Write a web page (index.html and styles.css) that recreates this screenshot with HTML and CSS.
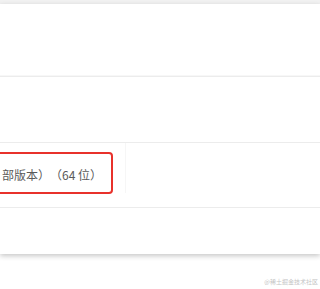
FILE: index.html
```html
<!DOCTYPE html>
<html lang="zh-CN">
<head>
<meta charset="utf-8">
<link rel="stylesheet" href="styles.css">
</head>
<body>
<div class="topbar"></div>
<div class="card">
  <div class="row r1"></div>
  <div class="row r2"></div>
  <div class="row r3">
    <div class="hl"><span class="txt">部版本）（64 位）</span></div>
    <div class="vline"></div>
  </div>
  <div class="row r4"></div>
</div>
<div class="mark">@稀土掘金技术社区</div>
</body>
</html>
```
FILE: styles.css
```css
html, body {
  margin: 0;
  padding: 0;
  background: #ffffff;
  overflow: hidden;
  font-family: "Noto Sans CJK SC", "Noto Sans", sans-serif;
}
.topbar {
  height: 4px;
  background: #f1f1f1;
}
.card {
  background: #ffffff;
  box-shadow: 0 2px 5px rgba(0, 0, 0, 0.22);
}
.row {
  border-bottom: 1px solid #ececec;
}
.r1 {
  height: 72px;
  box-shadow: inset 0 -4px 0 -3px #f7f7f7;
}
.r2 {
  height: 65px;
}
.r3 {
  height: 64px;
  display: flex;
  align-items: flex-start;
}
.r4 {
  height: 46px;
  border-bottom: 0;
}
.hl {
  margin-top: 9px;
  margin-left: -12px;
  height: 38px;
  border: 2px solid #e8312b;
  border-radius: 4px;
  padding: 0 9px 0 12px;
  display: flex;
  align-items: center;
}
.txt {
  font-size: 12px;
  line-height: 18px;
  color: #5a5a5a;
  padding-top: 4px;
  white-space: nowrap;
  text-spacing-trim: space-all;
  font-feature-settings: "halt" 0, "palt" 0;
}
.vline {
  width: 1px;
  height: 50px;
  margin-left: 12px;
  background: #f6f6f6;
}
.mark {
  margin-top: 24px;
  padding-right: 2px;
  text-align: right;
  font-size: 6px;
  line-height: 8px;
  color: #c4c4c4;
}
```
